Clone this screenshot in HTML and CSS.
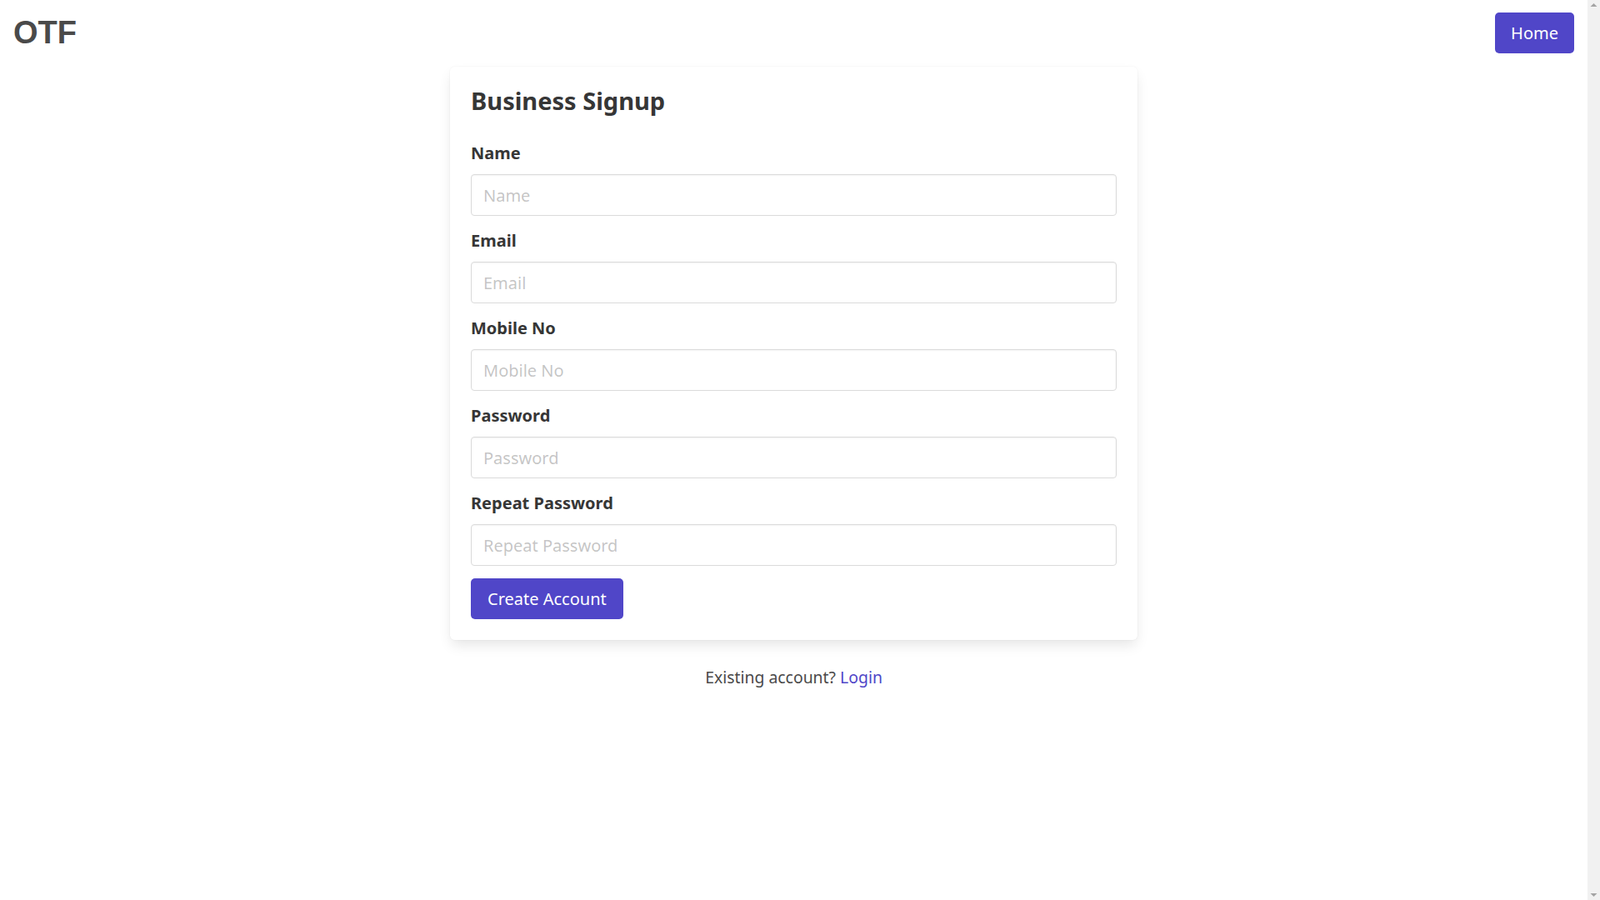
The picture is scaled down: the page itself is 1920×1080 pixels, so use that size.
FILE: index.html
```html
<!DOCTYPE html>
<html lang="en">
<head>
<meta charset="utf-8">
<title>Business Signup - OTF</title>
<link rel="stylesheet" href="styles.css">
</head>
<body>
<div class="app">
  <header class="topbar">
    <div class="logo">OTF</div>
    <a class="btn btn-home" href="#">Home</a>
  </header>
  <main class="page">
    <form class="card">
      <h1 class="title">Business Signup</h1>
      <div class="field">
        <label class="label">Name</label>
        <input class="input" type="text" placeholder="Name">
      </div>
      <div class="field">
        <label class="label">Email</label>
        <input class="input" type="email" placeholder="Email">
      </div>
      <div class="field">
        <label class="label">Mobile No</label>
        <input class="input" type="text" placeholder="Mobile No">
      </div>
      <div class="field">
        <label class="label">Password</label>
        <input class="input" type="password" placeholder="Password">
      </div>
      <div class="field field-last">
        <label class="label">Repeat Password</label>
        <input class="input" type="password" placeholder="Repeat Password">
      </div>
      <button class="btn btn-submit" type="button">Create Account</button>
    </form>
    <p class="existing">Existing account? <a class="link" href="#">Login</a></p>
  </main>
</div>
<div class="scrollbar" aria-hidden="true">
  <svg class="arrow" width="15" height="12" viewBox="0 0 15 12"><polygon points="3.5,8 7.5,4 11.5,8" fill="#a3a3a3"/></svg>
  <svg class="arrow" width="15" height="12" viewBox="0 0 15 12"><polygon points="3.5,4 7.5,8 11.5,4" fill="#a3a3a3"/></svg>
</div>
</body>
</html>
```
FILE: styles.css
```css
body {
  margin: 0;
  display: flex;
  min-height: 100vh;
  background: #ffffff;
  color: #4a4a4a;
  font-family: "Noto Sans", "Open Sans", sans-serif;
}
.app {
  flex: 1;
  min-width: 0;
}
.scrollbar {
  width: 15px;
  flex: none;
  height: 100vh;
  background: #f1f1f1;
  display: flex;
  flex-direction: column;
  justify-content: space-between;
}
.arrow {
  display: block;
}
.topbar {
  display: flex;
  justify-content: space-between;
  align-items: center;
  padding: 15px 16px 0 16px;
}
.logo {
  font-family: "Liberation Sans", Arial, sans-serif;
  font-weight: 700;
  font-size: 38px;
  line-height: 49px;
  color: #4a4a4a;
}
.btn {
  display: inline-flex;
  align-items: center;
  justify-content: center;
  box-sizing: border-box;
  height: 49px;
  padding: 0 20px;
  background: #5046c8;
  color: #ffffff;
  font-family: inherit;
  font-size: 20px;
  border: none;
  border-radius: 5px;
  text-decoration: none;
  cursor: pointer;
}
.btn-home {
  padding: 0 19px;
}
.page {
  display: flex;
  flex-direction: column;
  align-items: center;
  padding-top: 16px;
}
.card {
  box-sizing: border-box;
  width: 825px;
  padding: 25px;
  background: #ffffff;
  border-radius: 6px;
  box-shadow: 0 8px 16px -2px rgba(10, 10, 10, 0.1), 0 0 0 1px rgba(10, 10, 10, 0.02);
}
.title {
  margin: -2px 0 32px 0;
  font-size: 29px;
  line-height: 36px;
  font-weight: 700;
  color: #363636;
}
.field {
  margin-bottom: 17px;
}
.field-last {
  margin-bottom: 15px;
}
.label {
  display: block;
  margin-bottom: 12px;
  font-size: 20px;
  line-height: 26px;
  font-weight: 700;
  color: #363636;
}
.input {
  display: block;
  box-sizing: border-box;
  width: 100%;
  height: 50px;
  padding: 0 14px;
  border: 1px solid #dbdbdb;
  border-radius: 4px;
  box-shadow: inset 0 1px 2px rgba(10, 10, 10, 0.05);
  font-family: inherit;
  font-size: 20px;
  color: #363636;
  background: #ffffff;
}
.input::placeholder {
  color: rgba(54, 54, 54, 0.3);
}
.existing {
  margin: 30px 0 0 0;
  font-size: 19.4px;
  line-height: 30px;
  color: #4a4a4a;
}
.link {
  color: #5046c8;
  text-decoration: none;
}
```
